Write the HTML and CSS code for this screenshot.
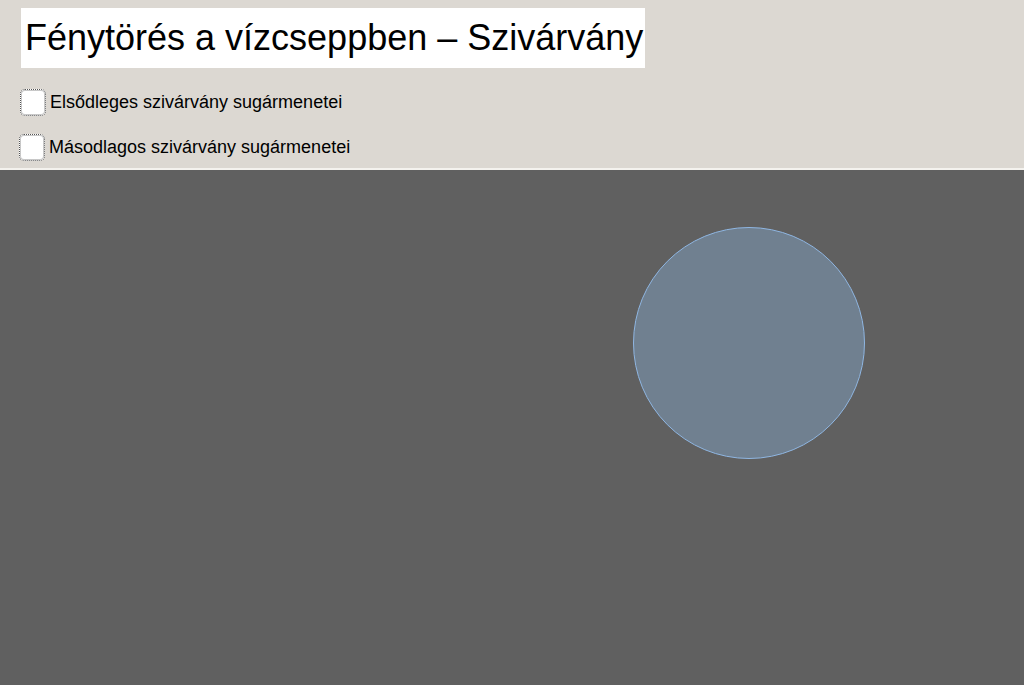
FILE: index.html
```html
<!DOCTYPE html>
<html lang="hu">
<head>
<meta charset="utf-8">
<title>Fénytörés a vízcseppben – Szivárvány</title>
<link rel="stylesheet" href="styles.css">
</head>
<body>
<div class="app">
  <header class="panel">
    <h1 class="title">Fénytörés a vízcseppben – Szivárvány</h1>
    <label class="opt opt-first"><span class="box"></span><span class="lbl">Elsődleges szivárvány sugármenetei</span></label>
    <label class="opt opt-second"><span class="box"></span><span class="lbl">Másodlagos szivárvány sugármenetei</span></label>
  </header>
  <main class="canvas">
    <svg class="drop" width="236" height="236" viewBox="0 0 236 236">
      <circle cx="118" cy="118" r="115.5" fill="#708090" stroke="#8fb6e2" stroke-width="1"/>
    </svg>
  </main>
</div>
</body>
</html>
```
FILE: styles.css
```css
html, body {
  margin: 0;
  padding: 0;
  height: 100%;
  background: #606060;
  font-family: "Liberation Sans", Arial, sans-serif;
}

.app {
  display: flex;
  flex-direction: column;
  height: 100%;
}

.panel {
  background: #dcd8d2;
  height: 160px;
  border-bottom: 2px solid #f4f2ee;
  display: flex;
  flex-direction: column;
  align-items: flex-start;
  padding: 8px 0 0 0;
  box-sizing: content-box;
  flex: none;
}

.title {
  margin: 0 0 0 21px;
  background: #ffffff;
  font-weight: normal;
  font-size: 36px;
  line-height: 60px;
  height: 60px;
  padding: 0 2px 0 4px;
  color: #000;
  white-space: nowrap;
}

.opt {
  display: flex;
  align-items: center;
  gap: 4px;
  font-size: 18px;
  color: #000;
}

.opt-first {
  margin: 21px 0 0 20px;
}

.opt-second {
  margin: 18px 0 0 19px;
}

.box {
  width: 24px;
  height: 25px;
  background: #fff;
  border: 1px dotted #555;
  border-radius: 5px;
  box-shadow: inset 0 0 0 1px #c8c8c8;
}

.canvas {
  flex: 1;
  background: #606060;
  position: relative;
}

.drop {
  position: absolute;
  left: 631px;
  top: 55px;
}
```
